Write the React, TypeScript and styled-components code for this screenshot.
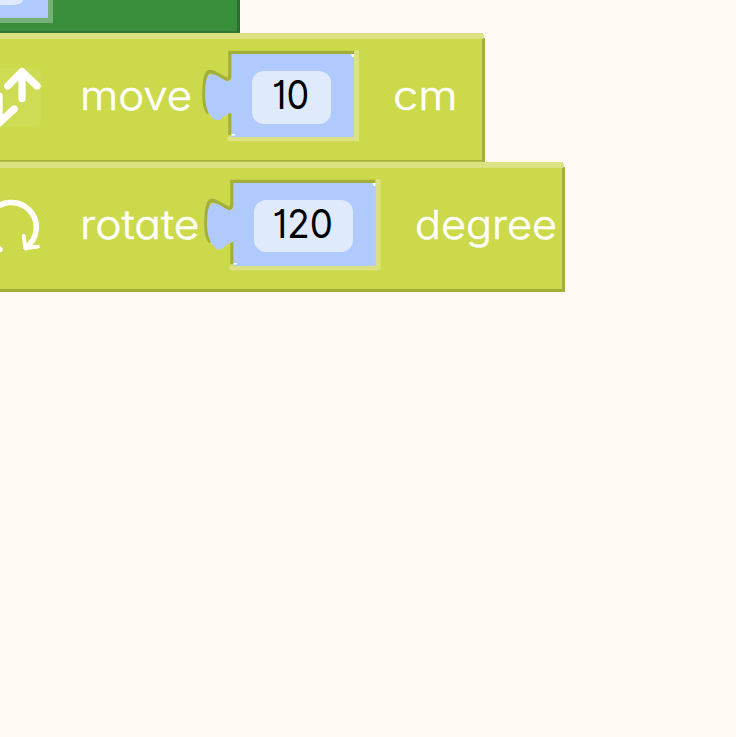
import React from 'react';
import styled, { createGlobalStyle } from 'styled-components';

const GlobalStyle = createGlobalStyle`
  body { margin: 0; background: #fff8f3; overflow: hidden; }
  * { box-sizing: border-box; }
`;

const Workspace = styled.main`
  width: 736px;
  height: 737px;
  overflow: hidden;
  background: #fff8f3;
  font-family: Inter, 'Open Sans', sans-serif;
  font-feature-settings: 'cv11' 1, 'cv01' 1;
`;

const ParentBlock = styled.section`
  width: 240px;
  height: 33px;
  background: #3a8f3d;
  border-right: 3px solid #29702e;
  border-bottom: 2px solid #2f7733;
`;

const ParentSocket = styled.div`
  width: 53px;
  height: 23px;
  background: #b0cafd;
  border: solid #75b177;
  border-width: 0 5px 5px 0;
`;

const ParentField = styled.div`
  width: 23px;
  height: 5px;
  background: #dfeafd;
  border-bottom-right-radius: 10px 5px;
`;

const Block = styled.section<{ $width: number; $height: number; $edge: number }>`
  display: flex;
  flex-direction: column;
  width: ${p => p.$width}px;
  height: ${p => p.$height}px;
  background: linear-gradient(#a3ae3b, #a3ae3b) right 5px / 3px 100% no-repeat,
    linear-gradient(#a3ae3b, #a3ae3b) left bottom / 100% ${p => p.$edge}px no-repeat,
    linear-gradient(#ccd94b, #ccd94b) left top / calc(100% - 2px) 100% no-repeat;
  border-top-right-radius: 4px;
`;

const Highlight = styled.div`
  flex: none;
  height: 6px;
  margin-right: 1.5px;
  background: #dce282;
  border-radius: 0 4px 3px 0;
`;

const Content = styled.div`
  display: flex;
  align-items: flex-start;
  padding-top: 11px;
`;

const Icon = styled.svg`
  flex: none;
  width: 80px;
  height: 92px;
`;

const Label = styled.span<{ $width: number; $stretch: number }>`
  flex: none;
  width: ${p => p.$width}px;
  color: #fff;
  font-size: 40px;
  font-weight: 300;
  -webkit-text-stroke: 0.5px #fff;
  line-height: 91px;
  white-space: nowrap;
  transform: scaleX(${p => p.$stretch});
  transform-origin: left center;
`;

const Socket = styled.div<{ $width: number; $gap: number }>`
  position: relative;
  flex: none;
  width: ${p => p.$width}px;
  height: 92px;
  margin-right: ${p => p.$gap}px;
  padding: 21px 0 0 49.5px;
`;

const SocketShape = styled.svg`
  position: absolute;
  inset: 0;
`;

const Field = styled.div<{ $width: number }>`
  position: relative;
  display: flex;
  align-items: center;
  justify-content: center;
  width: ${p => p.$width}px;
  height: 52.5px;
  border-radius: 12px;
  background: #dfeafd;
`;

const FieldValue = styled.span<{ $stretch: number }>`
  color: #000;
  font-size: 40px;
  line-height: 50px;
  padding-bottom: 4px;
  transform: scaleX(${p => p.$stretch});
  margin-left: -2px;
`;

const TAB =
  'V26 C29.5 31 27.5 32 23.5 30.5 C17 27 11.5 22.5 7.5 24.8 C3.5 27.5 3 38 3 45 C3 57 7 65 10 67.5 C13 71 16 71 19 69 C22 67 24 64 29.5 63';

type NumberSocketProps = { value: string; width: number; fieldWidth: number; gap: number; stretch: number };

function NumberSocket({ value, width, fieldWidth, gap, stretch }: NumberSocketProps) {
  const r = width - 5;
  return (
    <Socket $width={width} $gap={gap}>
      <SocketShape width={width} height={92} viewBox={`0 0 ${width} 92`} fill="none">
        <path d={`M${r} 2.5 H28 V24 C28 29 26 30 23 28.5 C16 25 10 19.5 6 22.3 C2 26 2 40 2 45 C2 55 3.5 60 6.5 63 M28 62 V85`} stroke="#a3ae3b" strokeWidth="3.5" />
        <path d={`M${r + 2.5} 2.5 V88.7 H27.5`} stroke="#dce282" strokeWidth="5" strokeLinecap="round" />
        <path d={`M${r} 4 H29.5 ${TAB} V87 H${r} Z`} fill="#b0cafd" />
        <path d={`M${r - 3} 4 H${r} V7 H${r - 2} Z M29.5 84 H33 V85.5 H29.5 Z`} fill="#fff" />
      </SocketShape>
      <Field $width={fieldWidth}>
        <FieldValue $stretch={stretch}>{value}</FieldValue>
      </Field>
    </Socket>
  );
}

const MoveIcon = () => (
  <Icon viewBox="0 50 80 92" fill="none" stroke="#fff" strokeWidth="7.3" strokeLinecap="round" strokeLinejoin="round">
    <rect x="-19" y="68" width="60" height="59" rx="6" fill="#cedb55" stroke="none" />
    <path d="M22 98.5 V72 M7.7 86 L22 71.7 L37 86 M-1 96 V123 L14.2 109" />
  </Icon>
);

const RotateIcon = () => (
  <Icon viewBox="0 179 80 92" fill="none" stroke="#fff" strokeWidth="5.5" strokeLinecap="round" strokeLinejoin="round">
    <path d="M0 249.5 A24.9 24.9 0 1 1 26 247.5" />
    <path d="M23.7 235.8 L25.3 248 L38 246.7" strokeWidth="3.8" />
  </Icon>
);

export default function App() {
  return (
    <>
      <GlobalStyle />
      <Workspace>
        <ParentBlock>
          <ParentSocket><ParentField /></ParentSocket>
        </ParentBlock>
        <Block $width={485.4} $height={128.5} $edge={1.5}>
          <Highlight />
          <Content>
            <MoveIcon />
            <Label $width={122} $stretch={1.095}>move</Label>
            <NumberSocket value="10" width={157} fieldWidth={79.5} gap={34} stretch={0.9} />
            <Label $width={80} $stretch={1.125}>cm</Label>
          </Content>
        </Block>
        <Block $width={565.4} $height={130.5} $edge={3}>
          <Highlight />
          <Content>
            <RotateIcon />
            <Label $width={124.3} $stretch={1.108}>rotate</Label>
            <NumberSocket value="120" width={176.5} fieldWidth={99.5} gap={34.2} stretch={0.92} />
            <Label $width={145} $stretch={1.08}>degree</Label>
          </Content>
        </Block>
      </Workspace>
    </>
  );
}
